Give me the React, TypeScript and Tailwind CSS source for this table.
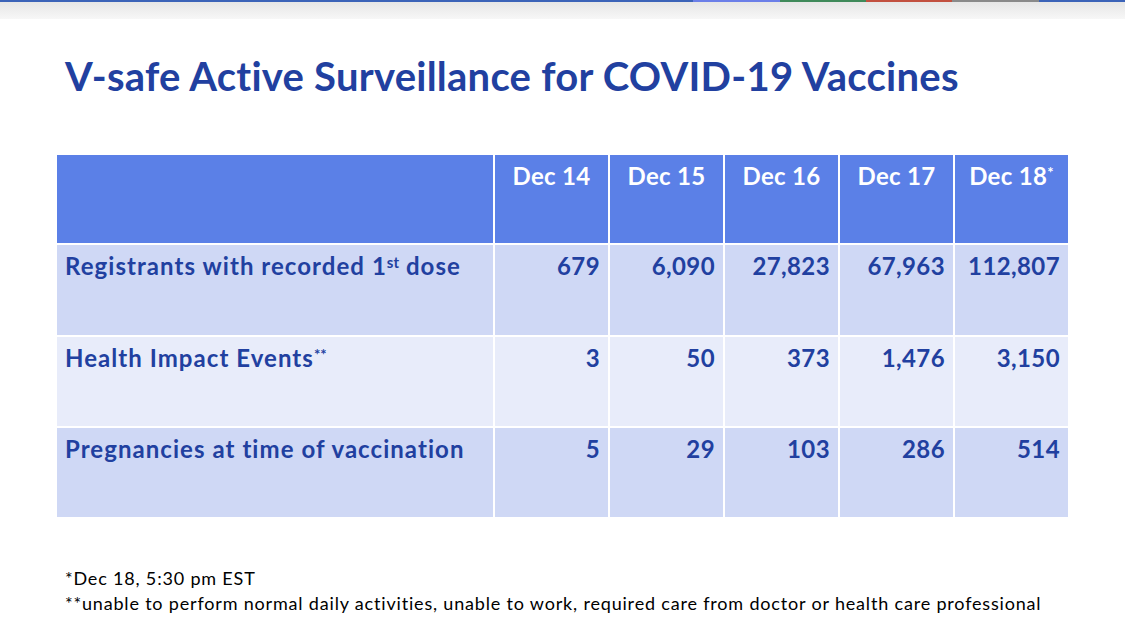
const rows = [
  { label: "Registrants with recorded 1", sup: "st", tail: " dose", values: ["679", "6,090", "27,823", "67,963", "112,807"], bg: "bg-[#cfd8f5]", h: "h-[90px]" },
  { label: "Health Impact Events", sup: "**", tail: "", values: ["3", "50", "373", "1,476", "3,150"], bg: "bg-[#e8ecfa]", h: "h-[89px]" },
  { label: "Pregnancies at time of vaccination", sup: "", tail: "", values: ["5", "29", "103", "286", "514"], bg: "bg-[#cfd8f5]", h: "h-[89px]" },
];

const days = ["Dec 14", "Dec 15", "Dec 16", "Dec 17", "Dec 18"];

const App = () => {
  return (
    <div className="w-[1125px] h-[639px] bg-white overflow-hidden font-['Lato',sans-serif]">
      {/* top accent bar */}
      <div className="flex h-[2px]">
        <div className="w-[693px] bg-[#3b63b8]" />
        <div className="w-[87px] bg-[#6b7fe8]" />
        <div className="w-[86px] bg-[#3f8a5a]" />
        <div className="w-[86px] bg-[#c2503f]" />
        <div className="w-[87px] bg-[#8a8a8a]" />
        <div className="flex-1 bg-[#3b63b8]" />
      </div>
      <div className="h-[17px] bg-gradient-to-b from-[#e6e6e6] to-[#f7f7f7]" />

      <h1 className="ml-[65px] mt-[33px] h-[48px] text-[40px] leading-[48px] font-bold text-[#2140a0] tracking-[0.25px]">
        V-safe Active Surveillance for COVID-19 Vaccines
      </h1>

      <div className="ml-[57px] mt-[55px] w-[1011px] grid grid-cols-[436px_repeat(5,113px)] gap-[2px] bg-white">
        <div className="h-[88px] bg-[#5b80e7]" />
        {days.map((d, i) => (
          <div key={d} className="h-[88px] bg-[#5b80e7] pt-[7px] text-center text-white font-bold text-[24px] leading-[28px] tracking-[0.3px]">
            {d}
            {i === 4 && <sup className="text-[15px]">*</sup>}
          </div>
        ))}
        {rows.map((r, ri) => (
          <>
            <div key={"l" + ri} className={`${r.h} ${r.bg} pl-[8px] pt-[7px] text-[#2140a0] font-bold text-[24px] leading-[28px] tracking-[1.05px]`}>
              {r.label}
              {r.sup && <sup className="text-[15px] tracking-normal">{r.sup}</sup>}
              {r.tail}
            </div>
            {r.values.map((v, vi) => (
              <div key={"v" + ri + vi} className={`${r.h} ${r.bg} pr-[8px] pt-[7px] text-right text-[#2140a0] font-bold text-[24px] leading-[28px] tracking-[0.4px]`}>
                {v}
              </div>
            ))}
          </>
        ))}
      </div>

      <div className="ml-[65px] mt-[49px] text-[18px] leading-[25px] tracking-[0.82px] text-black">
        <div>*Dec 18, 5:30 pm EST</div>
        <div>**unable to perform normal daily activities, unable to work, required care from doctor or health care professional</div>
      </div>
    </div>
  );
};

export default App;
